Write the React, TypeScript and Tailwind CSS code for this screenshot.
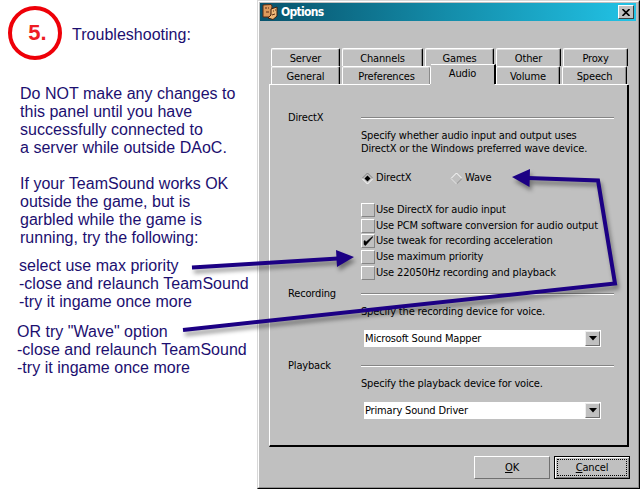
import React from "react";

type TabProps = { label: string; className: string };

function Tab({ label, className }: TabProps) {
  return (
    <div
      className={
        "flex h-[18px] items-center justify-center rounded-t-[2px] border-t border-l border-r border-t-white border-l-white border-r-black shadow-[inset_-1px_0_0_#8a8a8a,inset_0_1px_0_#dedede] " +
        className
      }
    >
      <span className="mt-[2px] leading-[14px]">{label}</span>
    </div>
  );
}

function Divider() {
  return <div className="h-[2px] w-[253px] border-t border-b border-t-[#858585] border-b-white" />;
}

function Check({ label, checked }: { label: string; checked?: boolean }) {
  return (
    <div className="flex h-[15.8px] items-center">
      <div className="flex size-[14px] items-center justify-center border border-t-white border-l-white border-r-[#858585] border-b-[#858585]">
        {checked && (
          <svg width="10" height="10" viewBox="0 0 10 10">
            <path d="M1 5 V8.5 L2.5 9.5 L9.5 1.5 V0.5 L3 6 L2 4.5 Z" fill="#000" stroke="#000" strokeWidth="0.5" />
          </svg>
        )}
      </div>
      <span className="ml-[1px] leading-[14px]">{label}</span>
    </div>
  );
}

function Diamond({ selected }: { selected?: boolean }) {
  return (
    <svg width="13" height="13" viewBox="0 0 13 13">
      <path d="M1 6.5 L6.5 1 L12 6.5" fill="none" stroke={selected ? "#808080" : "#fff"} />
      <path d="M1 6.5 L6.5 12 L12 6.5" fill="none" stroke={selected ? "#fff" : "#8c8c8c"} />
      {!selected && <path d="M6.5 12 L1 6.5" stroke="#fff" />}
      {selected && <path d="M6.5 3.5 L9.5 6.5 L6.5 9.5 L3.5 6.5 Z" fill="#000" />}
    </svg>
  );
}

function Select({ value }: { value: string }) {
  return (
    <div className="ml-[3px] flex h-[17px] w-[237px] items-center justify-between bg-white pl-[1px]">
      <span className="leading-[14px]">{value}</span>
      <div className="mr-[1px] flex h-[15px] w-[15px] items-center justify-center border border-t-[#eee] border-l-[#eee] border-r-[#707070] border-b-[#707070] bg-[#c0c0c0]">
        <svg width="8" height="5" viewBox="0 0 8 5">
          <path d="M0 0 H8 L4 4.5 Z" fill="#000" />
        </svg>
      </div>
    </div>
  );
}

function Instructions() {
  return (
    <div className="w-[257px] shrink-0 whitespace-nowrap font-['Liberation_Sans',Arial,sans-serif] text-[16px] leading-[18px] tracking-[0.02px] text-[#1c0f70]">
      <div className="flex h-[60px] pl-[8px] pt-[6px]">
        <div className="flex size-[54px] items-center justify-center rounded-full border-[4px] border-[#ee0008] pl-[5px] text-[22px] font-bold tracking-normal text-[#ee1c24]">
          5.
        </div>
        <p className="ml-[10px] mt-[20px]">Troubleshooting:</p>
      </div>
      <p className="ml-[20px] mt-[25px]">
        Do NOT make any changes to
        <br />
        this panel until you have
        <br />
        successfully connected to
        <br />a server while outside DAoC.
      </p>
      <p className="ml-[20px] mt-[18px]">
        If your TeamSound works OK
        <br />
        outside the game, but is
        <br />
        garbled while the game is
        <br />
        running, try the following:
      </p>
      <p className="ml-[19px] mt-[10px]">
        select use max priority
        <br />
        -close and relaunch TeamSound
        <br />
        -try it ingame once more
      </p>
      <p className="ml-[17px] mt-[12px]">
        OR try "Wave" option
        <br />
        -close and relaunch TeamSound
        <br />
        -try it ingame once more
      </p>
    </div>
  );
}

function TitleBar() {
  return (
    <div className="flex h-[18px] items-center bg-linear-to-r from-[#08536c] via-[#148daa] to-[#22c3e6] pl-[2px] pr-[2px]">
      <svg width="16" height="16" viewBox="0 0 16 16">
        <path d="M1 1 L9 0.5 L10 2 L9 13 L1 13 Z" fill="#dc9a5c" stroke="#5a2b12" />
        <path d="M9 5 L15 3 L15 12 L11 15.5 L6 14 L9 11 Z" fill="#eeb878" stroke="#43200e" />
        <path d="M3 4 h2 M6 4 h1 M4 8 h3 M11 7 h1 M13 6 h1 M10 11 l3 -1" stroke="#5a2b12" />
      </svg>
      <span className="ml-[3px] grow text-[12px] font-bold leading-[16px] tracking-[-0.7px] text-white">Options</span>
      <div className="flex h-[14px] w-[16px] items-center justify-center border border-t-white border-l-white border-r-[#404040] border-b-[#404040] bg-[#c0c0c0]">
        <svg width="8" height="7" viewBox="0 0 8 7">
          <path d="M0.5 0 L7.5 7 M7.5 0 L0.5 7" stroke="#000" strokeWidth="1.6" />
        </svg>
      </div>
    </div>
  );
}

function AudioPanel() {
  return (
    <div className="ml-[9px] h-[362px] w-[360px] border-l border-r-2 border-b-2 border-l-white border-r-black border-b-black pl-[18px]">
      <div className="flex h-[176px] pt-[26px]">
        <div className="w-[73px] leading-[14px]">DirectX</div>
        <div className="pt-[6px]">
          <Divider />
          <p className="mt-[10px] leading-[13px]">
            Specify whether audio input and output uses
            <br />
            DirectX or the Windows preferred wave device.
          </p>
          <div className="mt-[16px] flex h-[14px] items-center">
            <div className="flex w-[89px] items-center gap-[2px]">
              <Diamond selected />
              <span>DirectX</span>
            </div>
            <div className="flex items-center gap-[2px]">
              <Diamond />
              <span>Wave</span>
            </div>
          </div>
          <div className="mt-[17px]">
            <Check label="Use DirectX for audio input" />
            <Check label="Use PCM software conversion for audio output" />
            <Check label="Use tweak for recording acceleration" checked />
            <Check label="Use maximum priority" />
            <Check label="Use 22050Hz recording and playback" />
          </div>
        </div>
      </div>
      <div className="flex h-[72px] pt-[26px]">
        <div className="w-[73px] leading-[14px]">Recording</div>
        <div className="pt-[6px]">
          <Divider />
          <p className="mt-[10px] leading-[13px]">Specify the recording device for voice.</p>
          <div className="mt-[12px]">
            <Select value="Microsoft Sound Mapper" />
          </div>
        </div>
      </div>
      <div className="flex pt-[26px]">
        <div className="w-[73px] leading-[14px]">Playback</div>
        <div className="pt-[6px]">
          <Divider />
          <p className="mt-[10px] leading-[13px]">Specify the playback device for voice.</p>
          <div className="mt-[12px]">
            <Select value="Primary Sound Driver" />
          </div>
        </div>
      </div>
    </div>
  );
}

function Dialog() {
  return (
    <div className="flex h-[489px] w-[383px] flex-col border border-l-[#d8d8d8] border-t-[#d8d8d8] border-r-black border-b-black">
      <div className="flex grow flex-col whitespace-nowrap border border-t-white border-l-white border-r-[#909090] border-b-[#909090] bg-[#c0c0c0] pl-[1px] pr-[2px] pt-[1px] font-['DejaVu_Sans_Condensed','DejaVu_Sans',Tahoma,sans-serif] text-[11px] tracking-[-0.16px] text-black">
        <TitleBar />
        <div className="ml-[11px] mt-[27px] flex h-[18px] gap-[2px]">
          <Tab label="Server" className="w-[69px]" />
          <Tab label="Channels" className="w-[81px]" />
          <Tab label="Games" className="w-[69px]" />
          <Tab label="Other" className="w-[65px]" />
          <Tab label="Proxy" className="w-[65px]" />
        </div>
        <div className="ml-[11px] flex h-[18px] items-end">
          <Tab label="General" className="w-[69px]" />
          <Tab label="Preferences" className="ml-[2px] w-[89px] border-r-white" />
          <div className="flex h-[20px] w-[65px] justify-center border-t border-r-2 border-t-white border-r-black bg-[#c0c0c0] pt-[2px] leading-[14px]">
            Audio
          </div>
          <Tab label="Volume" className="w-[64px]" />
          <Tab label="Speech" className="ml-[2px] w-[65px]" />
        </div>
        <div className="ml-[9px] flex h-[1px] w-[359px] justify-between">
          <div className="w-[161px] bg-white" />
          <div className="w-[133px] bg-white" />
        </div>
        <AudioPanel />
        <div className="ml-[214px] mt-[9px] flex gap-[4px]">
          <button className="h-[23px] w-[76px] border border-t-white border-l-white border-r-[#707070] border-b-[#707070] leading-[14px]">
            <u>O</u>K
          </button>
          <button className="h-[23px] w-[76px] border border-black p-[2px] leading-[14px] shadow-[inset_1px_1px_0_#fff,inset_-1px_-1px_0_#808080]">
            <span className="flex h-full items-center justify-center border border-dotted border-black">
              <span>
                <u>C</u>ancel
              </span>
            </span>
          </button>
        </div>
      </div>
    </div>
  );
}

function Arrows() {
  return (
    <svg
      className="pointer-events-none absolute left-0 top-0 drop-shadow-[2px_4px_2px_rgba(0,0,0,0.4)]"
      width="640"
      height="489"
      viewBox="0 0 640 489"
    >
      <g fill="none" stroke="#1c0084" strokeWidth="4">
        <path d="M192 267.5 L338 258.5" />
        <path d="M183 330 L615 283.5 L598 180.5 L528 178" />
      </g>
      <g fill="#1c0084">
        <path d="M354 257 L336 250 L337 267 Z" />
        <path d="M512 177 L530 169 L529.5 187 Z" />
      </g>
    </svg>
  );
}

export default function App() {
  return (
    <div className="relative flex h-[489px] w-[640px] overflow-hidden bg-white">
      <Instructions />
      <Dialog />
      <Arrows />
    </div>
  );
}
